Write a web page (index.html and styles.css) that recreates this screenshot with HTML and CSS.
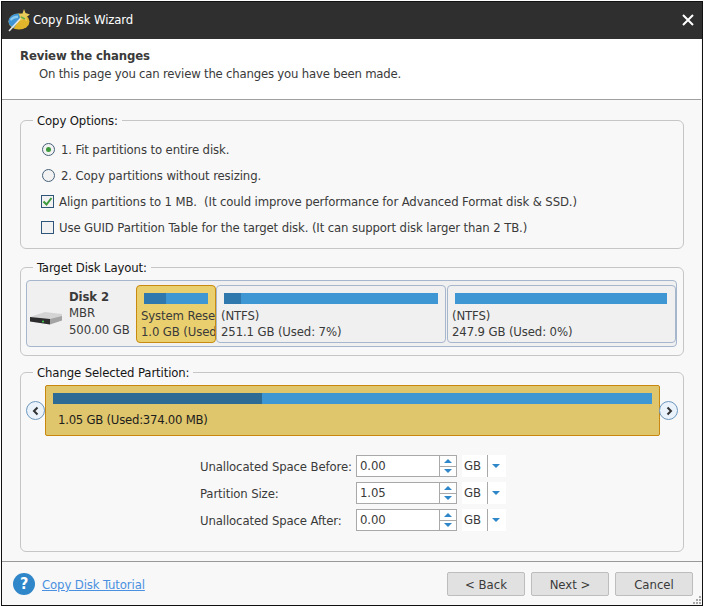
FILE: index.html
```html
<!DOCTYPE html>
<html lang="en">
<head>
  <meta charset="UTF-8" />
  <title>Copy Disk Wizard</title>
  <link rel="stylesheet" href="styles.css">
</head>
<body>
  <div class="window">
    <div class="titlebar">
      <svg class="app-icon" width="24" height="24" viewBox="0 0 24 24">
        <ellipse cx="12" cy="13.500" rx="10.500" ry="8" fill="#e0b52c"/>
        <path d="M1.500 13.500 C1.500 9 6 5.500 12 5.500 L13 10 L7 20 C3.500 18.500 1.500 16.500 1.500 13.500Z" fill="#3f94d6"/>
        <path d="M3 11 C5 8.500 8 7.500 11 7.500 L11 10 C8 10 6 11 4 13Z" fill="#8ccbee"/>
        <path d="M2 23 L14 10" stroke="#e8e8e8" stroke-width="1.600"/>
        <path d="M17 1 L18.500 5 L23 6.500 L19.500 9 L20 13.500 L16.500 11 L13 13 L14 9 L11.500 6 L15.500 5.500Z" fill="#e8cc5a"/>
        <path d="M14 9 L18 11" stroke="#62b04a" stroke-width="1.500"/>
      </svg>
      <span class="title">Copy Disk Wizard</span>
      <svg class="close" width="12" height="12" viewBox="0 0 12 12">
        <path d="M1 1 L11 11 M11 1 L1 11" stroke="#fff" stroke-width="2"/>
      </svg>
    </div>

    <div class="page-head">
      <h1>Review the changes</h1>
      <p>On this page you can review the changes you have been made.</p>
    </div>

    <div class="content">
      <fieldset class="group options">
        <legend>Copy Options:</legend>
        <label class="opt"><span class="radio on"></span>1. Fit partitions to entire disk.</label>
        <label class="opt"><span class="radio"></span>2. Copy partitions without resizing.</label>
        <label class="opt">
          <span class="check">
            <svg width="11" height="11" viewBox="0 0 11 11"><path d="M1.500 5.500 L4.500 8.500 L9.500 2" fill="none" stroke="#3c9a3c" stroke-width="2"/></svg>
          </span>Align partitions to 1 MB.&nbsp; (It could improve performance for Advanced Format disk &amp; SSD.)</label>
        <label class="opt"><span class="check"></span>Use GUID Partition Table for the target disk. (It can support disk larger than 2 TB.)</label>
      </fieldset>

      <fieldset class="group layout">
        <legend>Target Disk Layout:</legend>
        <div class="disk-map">
          <div class="disk-info">
            <svg class="hdd" width="33" height="14" viewBox="0 0 33 14">
              <path d="M0 6 L15 1 L32 3 L32 7 L16 9 Z" fill="#d4d4d4"/>
              <path d="M0 6 L20 8 L20 13.500 L0 10.500Z" fill="#2c2c2c"/>
              <path d="M20 8 L32 5 L32 9.500 L20 13.500Z" fill="#a4a4a4"/>
              <circle cx="13" cy="10.500" r="1" fill="#3fd04f"/>
            </svg>
            <div class="disk-text">
              <b>Disk 2</b>
              <span>MBR</span>
              <span>500.00 GB</span>
            </div>
          </div>
          <div class="part selected part-a">
            <div class="bar"><div class="used" style="width:35%"></div></div>
            <div class="part-text">System Rese</div>
            <div class="part-text">1.0 GB (Used</div>
          </div>
          <div class="part part-b">
            <div class="bar"><div class="used" style="width:8%"></div></div>
            <div class="part-text">(NTFS)</div>
            <div class="part-text">251.1 GB (Used: 7%)</div>
          </div>
          <div class="part part-c">
            <div class="bar"></div>
            <div class="part-text">(NTFS)</div>
            <div class="part-text">247.9 GB (Used: 0%)</div>
          </div>
        </div>
      </fieldset>

      <fieldset class="group change">
        <legend>Change Selected Partition:</legend>
        <div class="slider-row">
          <span class="nav">
            <svg width="10" height="10" viewBox="0 0 10 10"><path d="M6.500 1.500 L3 5 L6.500 8.500" fill="none" stroke="#333" stroke-width="2"/></svg>
          </span>
          <div class="slider">
            <div class="slider-bar"><div class="slider-used" style="width:34.900%"></div></div>
            <div class="slider-text">1.05 GB (Used:374.00 MB)</div>
          </div>
          <span class="nav">
            <svg width="10" height="10" viewBox="0 0 10 10"><path d="M3.500 1.500 L7 5 L3.500 8.500" fill="none" stroke="#333" stroke-width="2"/></svg>
          </span>
        </div>

        <div class="size-form">
          <div class="size-row">
            <label>Unallocated Space Before:</label>
            <div class="spin"><span class="spin-val">0.00</span><span class="spin-btns"><i class="up"></i><i class="down"></i></span></div>
            <div class="unit"><span>GB</span><i class="unit-drop"></i></div>
          </div>
          <div class="size-row">
            <label>Partition Size:</label>
            <div class="spin"><span class="spin-val">1.05</span><span class="spin-btns"><i class="up"></i><i class="down"></i></span></div>
            <div class="unit"><span>GB</span><i class="unit-drop"></i></div>
          </div>
          <div class="size-row">
            <label>Unallocated Space After:</label>
            <div class="spin"><span class="spin-val">0.00</span><span class="spin-btns"><i class="up"></i><i class="down"></i></span></div>
            <div class="unit"><span>GB</span><i class="unit-drop"></i></div>
          </div>
        </div>
      </fieldset>
    </div>

    <div class="footer">
      <span class="help">?</span>
      <a class="tutorial" href="#">Copy Disk Tutorial</a>
      <div class="buttons">
        <button>&lt; Back</button>
        <button>Next &gt;</button>
        <button>Cancel</button>
      </div>
      <svg class="grip" width="9" height="9" viewBox="0 0 9 9">
        <path d="M6 0h2v2h-2z M3 3h2v2h-2z M6 3h2v2h-2z M0 6h2v2h-2z M3 6h2v2h-2z M6 6h2v2h-2z" fill="#a8a8a8"/>
      </svg>
    </div>
  </div>
</body>
</html>
```

FILE: styles.css
```css
* {
  box-sizing: border-box;
}
body {
  margin: 0;
  width: 704px;
  height: 607px;
  overflow: hidden;
  background: #fff;
  font-family: "DejaVu Sans Condensed", "DejaVu Sans", sans-serif;
  font-size: 13px;
  letter-spacing: -0.12px;
  color: #3a3a3a;
}
.window {
  width: 702px;
  height: 605px;
  margin: 1px 0 0 1px;
  border: 1px solid #111;
  background: #f8f8f8;
  display: flex;
  flex-direction: column;
  position: relative;
}
.titlebar {
  height: 37px;
  background: #2f2f2f;
  display: flex;
  align-items: center;
  padding: 0 8px 2px 5px;
  color: #fff;
  flex: none;
}
.app-icon {
  margin-right: 2px;
}
.title {
  flex: 1;
}
.page-head {
  height: 61px;
  background: #fff;
  border-bottom: 1px solid #a0a0a0;
  padding: 9px 0 0 18px;
  flex: none;
  margin-right: 1px;
}
.page-head h1 {
  margin: 0;
  font-size: 13px;
  line-height: 16px;
  color: #3a3a3a;
}
.page-head p {
  margin: 1px 0 0 19px;
  line-height: 17px;
  letter-spacing: -0.2px;
}
.content {
  flex: 1;
  padding: 12px 18px 0;
  border-bottom: 1px solid #999;
}
.group {
  margin: 0;
  padding: 0;
  border: 1px solid #c6c6c6;
  border-radius: 6px;
  min-width: 0;
}
.group legend {
  margin-left: 12px;
  padding: 1px 4px 0 4px;
  color: #151515;
  line-height: 16px;
}
.options {
  height: 137px;
  padding-top: 7px;
}
.opt {
  display: flex;
  align-items: center;
  height: 26px;
  padding-left: 20px;
}
.radio {
  width: 13px;
  height: 13px;
  border: 1px solid #44607a;
  border-radius: 50%;
  background: #f2f2f2;
  margin: 0 6px 0 1px;
  display: flex;
  align-items: center;
  justify-content: center;
  flex: none;
}
.radio.on::after {
  content: "";
  width: 5px;
  height: 5px;
  border-radius: 50%;
  background: #3c9a3c;
}
.check {
  width: 13px;
  height: 13px;
  border: 1px solid #2f5578;
  background: #f2f2f2;
  margin-right: 5px;
  flex: none;
  display: flex;
  align-items: center;
  justify-content: center;
}
.layout {
  margin-top: 10px;
  height: 97px;
  padding-top: 4px;
}
.disk-map {
  height: 67px;
  margin: 0 6px 0 5px;
  border: 1px solid #a6b6cd;
  border-radius: 4px;
  background: #f0f0f0;
  display: flex;
  align-items: center;
}
.disk-info {
  width: 109px;
  display: flex;
  align-items: center;
  flex: none;
  padding-left: 3px;
}
.hdd {
  margin: 8px 6px 0 0;
  flex: none;
}
.disk-text {
  display: flex;
  flex-direction: column;
  line-height: 16.500px;
}
.part {
  height: 58px;
  border: 1px solid #a6b6cd;
  border-radius: 4px;
  padding: 7px 7px 0 4px;
  overflow: hidden;
  flex: none;
  white-space: nowrap;
}
.part-a {
  width: 80px;
}
.part-b {
  width: 230px;
}
.part-c {
  width: 229px;
  margin-left: 1px;
  padding-right: 8px;
}
.part.selected {
  background: #e9cf6e;
  border-color: #c98a10;
}
.bar {
  height: 11px;
  margin-left: 3px;
  margin-bottom: 4px;
  background: #3e97d3;
}
.used {
  height: 100%;
  background: #2f78ad;
}
.part-text {
  line-height: 16px;
}
.change {
  margin-top: 8px;
  height: 188px;
  padding-top: 4px;
}
.slider-row {
  display: flex;
  align-items: center;
  padding-left: 5px;
}
.nav {
  width: 19px;
  height: 19px;
  border: 1px solid #6d97bd;
  border-radius: 50%;
  background: #eaf3fb;
  display: flex;
  align-items: center;
  justify-content: center;
  flex: none;
}
.slider {
  width: 615px;
  height: 51px;
  background: #dfc66c;
  border: 1px solid #c8880f;
  border-radius: 2px;
  padding: 7px 7px 0;
  flex: none;
}
.slider + .nav {
  margin-left: -1px;
}
.slider-bar {
  height: 11px;
  background: #3e97d3;
}
.slider-used {
  height: 100%;
  background: #2d6a94;
}
.slider-text {
  margin: 8px 0 0 5px;
  line-height: 16px;
  color: #1d1d1d;
  letter-spacing: -0.25px;
}
.size-form {
  margin: 19px 0 0 179px;
  display: flex;
  flex-direction: column;
  gap: 5px;
}
.size-row {
  display: flex;
  align-items: center;
  height: 22px;
}
.size-row label {
  width: 156px;
  flex: none;
}
.spin {
  width: 101px;
  height: 22px;
  border: 1px solid #a9a9a9;
  background: #fff;
  display: flex;
  flex: none;
}
.spin-val {
  flex: 1;
  padding-left: 3px;
  line-height: 20px;
}
.spin-btns {
  width: 17px;
  border-left: 1px solid #a9a9a9;
  display: flex;
  flex-direction: column;
}
.spin-btns i {
  flex: 1;
  display: flex;
  align-items: center;
  justify-content: center;
}
.spin-btns .down {
  border-top: 1px solid #a9a9a9;
}
.up::after {
  content: "";
  border-left: 4px solid transparent;
  border-right: 4px solid transparent;
  border-bottom: 4px solid #2f86c8;
}
.down::after {
  content: "";
  border-left: 4px solid transparent;
  border-right: 4px solid transparent;
  border-top: 4px solid #2f86c8;
}
.unit {
  width: 44px;
  height: 22px;
  margin-left: 5px;
  background: #fff;
  display: flex;
  align-items: center;
  padding-left: 2px;
  flex: none;
}
.unit span {
  width: 24px;
  height: 100%;
  line-height: 22px;
  border-right: 1px solid #a9a9a9;
  flex: none;
}
.unit-drop {
  margin-left: 4px;
  border-left: 4px solid transparent;
  border-right: 4px solid transparent;
  border-top: 4px solid #2f86c8;
}
.footer {
  height: 43px;
  display: flex;
  align-items: center;
  padding: 1px 9px 0 11px;
  flex: none;
  position: relative;
}
.help {
  width: 22px;
  height: 22px;
  border-radius: 50%;
  background: #2f86c8;
  color: #fff;
  font-weight: bold;
  font-size: 16px;
  line-height: 22px;
  text-align: center;
  margin-right: 7px;
}
.tutorial {
  color: #4a90e0;
}
.buttons {
  margin-left: auto;
  display: flex;
  gap: 6px;
}
.buttons button {
  width: 78px;
  height: 24px;
  border: 1px solid #bdbdbd;
  border-radius: 2px;
  background: #e1e1e1;
  color: #3a3a3a;
  font-family: inherit;
  font-size: 13px;
  padding: 0;
}
.grip {
  position: absolute;
  right: 0;
  bottom: 0;
}
.close {
  flex: none;
}
```
